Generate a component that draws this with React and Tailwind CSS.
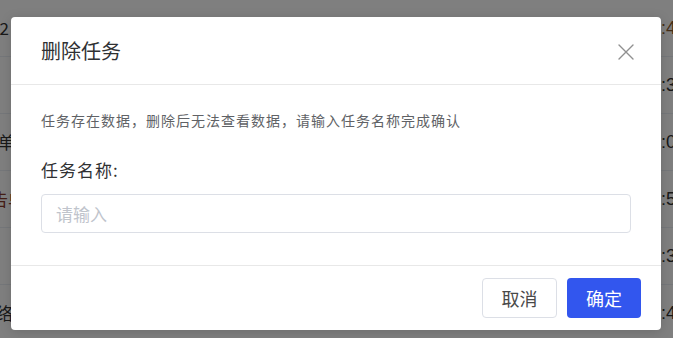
import React from 'react'

const rows = [
  { left: '12', leftCls: '-ml-[10px] text-[#333]', right: ':45', rightCls: 'text-[#8a5a2c]' },
  { left: '', leftCls: '', right: ':32', rightCls: 'text-[#333]' },
  { left: '报修单位', leftCls: '-ml-[36px] text-[#333]', right: ':08', rightCls: 'text-[#333]' },
  { left: '警告单', leftCls: '-ml-[26px] text-[#8a3a2b]', right: ':51', rightCls: 'text-[#333]' },
  { left: '', leftCls: '', right: ':36', rightCls: 'text-[#333]' },
  { left: '网络', leftCls: '-ml-[21px] text-[#333]', right: ':47', rightCls: 'text-[#333]' },
]

function CloseIcon() {
  return (
    <svg width="16" height="16" viewBox="0 0 16 16" fill="none">
      <path d="M1 1L15 15M15 1L1 15" stroke="#909090" strokeWidth="1.4" strokeLinecap="round" />
    </svg>
  )
}

export default function App() {
  return (
    <div className="relative w-[673px] h-[338px] overflow-hidden bg-white font-['Noto_Sans_CJK_SC','Noto_Sans',sans-serif]">
      {/* table behind the mask */}
      <div className="flex flex-col">
        {rows.map((r, i) => (
          <div key={i} className="flex items-center h-[57px] border-b border-[#ebeef5] text-[17px] whitespace-nowrap">
            <span className={r.leftCls}>{r.left}</span>
            <span className="flex-1" />
            <span className={`w-[12px] overflow-visible font-['Liberation_Sans',sans-serif] text-[18px] ${r.rightCls}`}>{r.right}</span>
          </div>
        ))}
      </div>

      {/* mask */}
      <div className="absolute inset-0 bg-black/50" />

      {/* dialog */}
      <div className="absolute left-[11px] top-[17px] w-[650px] bg-white rounded-[4px] shadow-[0_2px_12px_rgba(0,0,0,0.15)] flex flex-col">
        <div className="flex items-center justify-between h-[68px] pl-[30px] pr-[27px] border-b border-[#e8e8e8]">
          <span className="text-[20px] text-[#303133] leading-none">删除任务</span>
          <span className="mt-[3px]"><CloseIcon /></span>
        </div>

        <div className="flex flex-col px-[30px] pt-[25px] pb-[32px]">
          <div className="text-[14px] leading-[20px] tracking-[1px] text-[#606266]">
            任务存在数据，删除后无法查看数据，请输入任务名称完成确认
          </div>
          <div className="mt-[28px] text-[17px] leading-[24px] tracking-[1px] text-[#303133]">任务名称:</div>
          <input
            className="mt-[12px] h-[39px] w-full rounded-[4px] border border-[#dcdfe6] px-[14px] text-[17px] text-[#303133] placeholder:text-[#c0c4cc] outline-none"
            placeholder="请输入"
          />
        </div>

        <div className="flex justify-end gap-[10px] border-t border-[#e8e8e8] pt-[12px] pb-[12px] pr-[20px]">
          <button className="h-[40px] w-[75px] rounded-[4px] border border-[#dcdfe6] bg-white text-[18px] text-[#494949]">
            取消
          </button>
          <button className="h-[40px] w-[74px] rounded-[4px] bg-[#3256ee] text-[18px] text-white">
            确定
          </button>
        </div>
      </div>
    </div>
  )
}
